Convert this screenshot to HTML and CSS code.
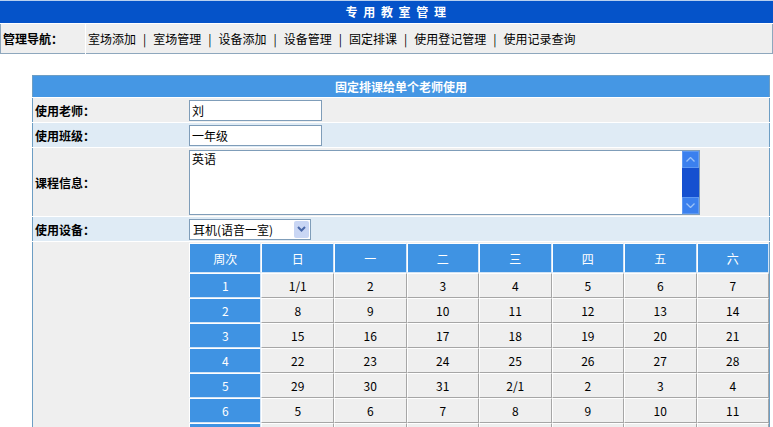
FILE: index.html
```html
<!DOCTYPE html>
<html lang="zh-CN">

<head>
	<meta charset="UTF-8">
	<title>专用教室管理</title>
	<link rel="stylesheet" href="styles.css">
</head>

<body>

	<!-- 顶部标题 -->
	<div class="topbar">专 用 教 室 管 理</div>

	<!-- 管理导航 -->
	<table class="nav">
		<tr>
			<td class="nav-title">管理导航：</td>
			<td class="nav-links">
				<a href="#">室场添加</a><span class="sep">|</span><a href="#">室场管理</a><span class="sep">|</span><a href="#">设备添加</a><span class="sep">|</span><a href="#">设备管理</a><span class="sep">|</span><a href="#">固定排课</a><span class="sep">|</span><a href="#">使用登记管理</a><span class="sep">|</span><a href="#">使用记录查询</a>
			</td>
		</tr>
	</table>

	<!-- 固定排课表单 -->
	<table class="form">
		<tr>
			<th colspan="2" class="form-head">固定排课给单个老师使用</th>
		</tr>
		<tr class="row-a">
			<td class="label">使用老师：</td>
			<td class="value"><input class="text" type="text" value="刘"></td>
		</tr>
		<tr class="row-b">
			<td class="label">使用班级：</td>
			<td class="value"><input class="text" type="text" value="一年级"></td>
		</tr>
		<tr class="row-a row-tall">
			<td class="label">课程信息：</td>
			<td class="value">
				<div class="memo">
					<textarea>英语</textarea>
					<div class="vscroll">
						<span class="vbtn">
							<svg width="9" height="5" viewBox="0 0 9 5"><path d="M0.5 4.5 L4.5 0.5 L8.5 4.5" fill="none" stroke="#9cc2f7" stroke-width="1.3"/></svg>
						</span>
						<span class="vtrack"></span>
						<span class="vbtn">
							<svg width="9" height="5" viewBox="0 0 9 5"><path d="M0.5 0.5 L4.5 4.5 L8.5 0.5" fill="none" stroke="#9cc2f7" stroke-width="1.3"/></svg>
						</span>
					</div>
				</div>
			</td>
		</tr>
		<tr class="row-b">
			<td class="label">使用设备：</td>
			<td class="value">
				<div class="select">
					<span class="select-text">耳机(语音一室)</span>
					<span class="select-btn">
						<svg width="9" height="6" viewBox="0 0 9 6"><path d="M1 1 L4.5 4.5 L8 1" fill="none" stroke="#4a68a8" stroke-width="2"/></svg>
					</span>
				</div>
			</td>
		</tr>
		<tr class="row-a">
			<td class="label"></td>
			<td class="value">
				<table class="cal">
					<tr>
						<th>周次</th><th>日</th><th>一</th><th>二</th><th>三</th><th>四</th><th>五</th><th>六</th>
					</tr>
					<tr><td class="wk">1</td><td>1/1</td><td>2</td><td>3</td><td>4</td><td>5</td><td>6</td><td>7</td></tr>
					<tr><td class="wk">2</td><td>8</td><td>9</td><td>10</td><td>11</td><td>12</td><td>13</td><td>14</td></tr>
					<tr><td class="wk">3</td><td>15</td><td>16</td><td>17</td><td>18</td><td>19</td><td>20</td><td>21</td></tr>
					<tr><td class="wk">4</td><td>22</td><td>23</td><td>24</td><td>25</td><td>26</td><td>27</td><td>28</td></tr>
					<tr><td class="wk">5</td><td>29</td><td>30</td><td>31</td><td>2/1</td><td>2</td><td>3</td><td>4</td></tr>
					<tr><td class="wk">6</td><td>5</td><td>6</td><td>7</td><td>8</td><td>9</td><td>10</td><td>11</td></tr>
					<tr><td class="wk">7</td><td>12</td><td>13</td><td>14</td><td>15</td><td>16</td><td>17</td><td>18</td></tr>
				</table>
			</td>
		</tr>
	</table>

</body>

</html>
```

FILE: styles.css
```css
body {
	margin: 0;
	font-family: "Noto Sans CJK SC", "Liberation Sans", sans-serif;
	font-size: 12px;
	color: #000;
	background-color: #fff;
}

/* 顶部标题条 */
.topbar {
	height: 22px;
	line-height: 22px;
	padding-left: 20px;
	border-top: 1px solid #b8d0ef;
	border-bottom: 1px solid #fff;
	background-color: #0553c9;
	color: #fff;
	font-weight: bold;
	text-align: center;
	letter-spacing: 1.5px;
}

/* 导航 */
.nav {
	width: 100%;
	border-collapse: collapse;
	border: 1px solid #8ea7bd;
	border-top: none;
	background-color: #efefef;
}

.nav td {
	height: 28px;
	padding: 0 0 1px 0;
}

.nav-title {
	width: 82px;
	padding-left: 2px !important;
	font-weight: bold;
	border-right: 1px solid #fff;
}

.nav-links {
	padding-left: 2px !important;
}

.nav-links a {
	color: #000;
	text-decoration: none;
}

.nav-links a:hover {
	text-decoration: underline;
}

.sep {
	margin: 0 7px;
}

/* 表单 */
.form {
	width: 738px;
	margin: 21px 0 0 32px;
	border: 1px solid #6d9ec4;
	border-collapse: collapse;
}

.form-head {
	height: 21px;
	padding: 0;
	background-color: #4597e4;
	color: #fff;
	font-weight: bold;
	border-bottom: 1px solid #fff;
}

.form td {
	padding: 0;
	border-bottom: 1px solid #fff;
}

.row-a td {
	background-color: #efefef;
}

.row-b td {
	background-color: #dfebf5;
}

.label {
	width: 152px;
	height: 24px;
	padding-left: 2px !important;
	font-weight: bold;
}

.row-tall .label {
	height: 68px;
}

.value {
	padding-left: 2px !important;
	vertical-align: middle;
}

.text {
	box-sizing: border-box;
	width: 133px;
	height: 21px;
	margin: 0;
	padding: 0 2px;
	border: 1px solid #7f9db9;
	background: #fff;
	font: inherit;
	display: block;
}

/* 多行文本框 + 蓝色滚动条 */
.memo {
	display: flex;
	width: 509px;
	height: 63px;
	border: 1px solid #7f9db9;
	background-color: #fff;
}

.memo textarea {
	flex: 1;
	margin: 0;
	padding: 1px 2px;
	border: none;
	resize: none;
	outline: none;
	font: inherit;
	font-size: 12px;
	line-height: 14px;
	overflow: hidden;
}

.vscroll {
	display: flex;
	flex-direction: column;
	width: 17px;
	background-color: #1652d4;
}

.vbtn {
	height: 17px;
	display: flex;
	align-items: center;
	justify-content: center;
	background-color: #3b80ee;
	border: 1px solid #5d98f2;
	box-sizing: border-box;
}

.vtrack {
	flex: 1;
	background-color: #1550d0;
}

/* 下拉框 */
.select {
	display: flex;
	align-items: center;
	box-sizing: border-box;
	width: 122px;
	height: 21px;
	border: 1px solid #7f9db9;
	background-color: #fff;
}

.select-text {
	flex: 1;
	padding-left: 3px;
}

.select-btn {
	width: 15px;
	height: 17px;
	margin-right: 1px;
	display: flex;
	align-items: center;
	justify-content: center;
	background-color: #c9d6f4;
	border-radius: 2px;
}

/* 周历 */
.cal {
	margin: 1px 0 0 0;
	border-collapse: separate;
	border-spacing: 0;
}

.form .cal td,
.cal th {
	width: 70px;
	text-align: center;
	border-top: 1px solid #fff;
	border-left: 1px solid #fff;
	border-right: 1px solid #a6a6a6;
	border-bottom: 1px solid #a6a6a6;
	background-color: #efefef;
}

.cal th {
	height: 26px;
	font-weight: normal;
	color: #fff;
	background-color: #3f93e3;
	border-right-color: #d2e4f6;
	border-bottom-color: #d2e4f6;
}

.form .cal td {
	height: 23px;
}

.form .cal td.wk {
	color: #fff;
	background-color: #3f93e3;
	border-right-color: #d2e4f6;
	border-bottom-color: #d2e4f6;
}
```
